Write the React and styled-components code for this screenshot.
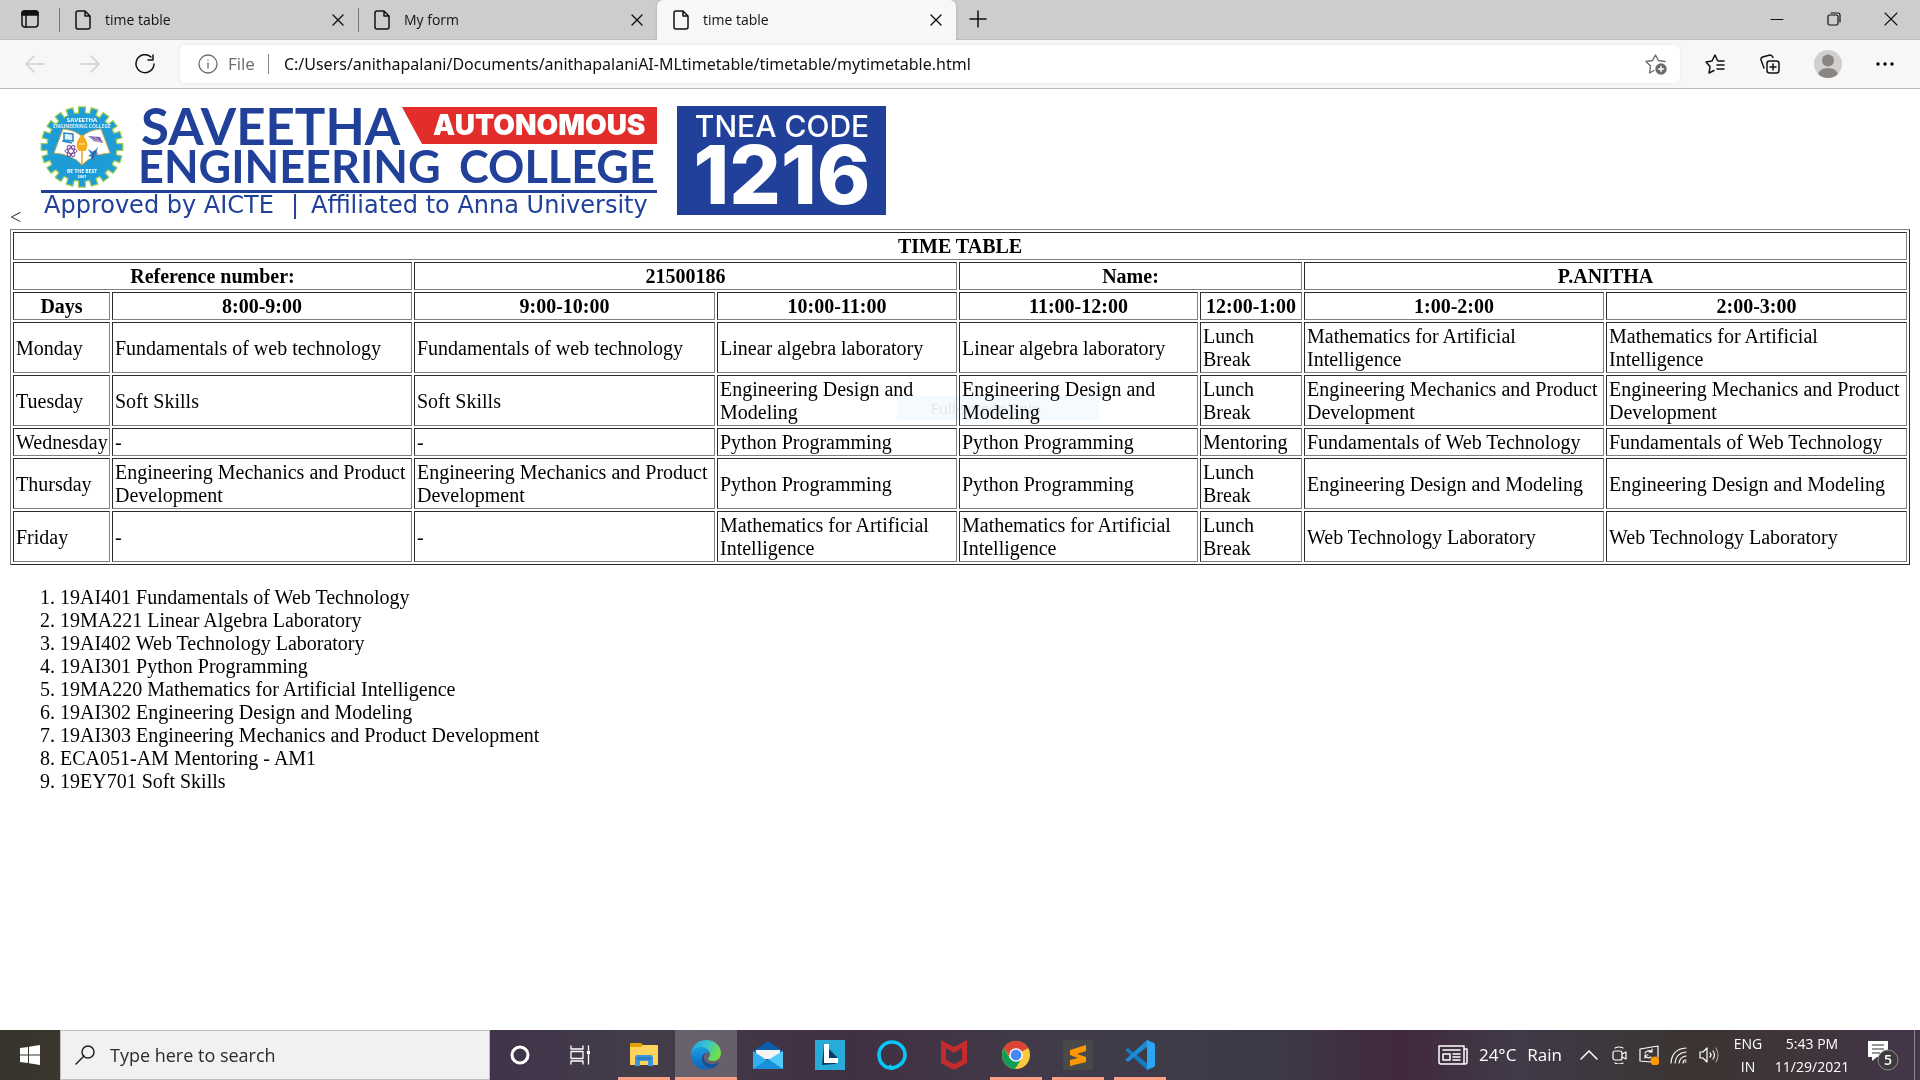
import React from "react";
import styled, { createGlobalStyle, css } from "styled-components";

const uiFont = `"Open Sans", "Noto Sans", sans-serif`;
const pageFont = `"Liberation Serif", "Times New Roman", serif`;

const GlobalStyle = createGlobalStyle`
  * { box-sizing: border-box; }
  body { margin: 0; background: #fff; }
  button, input { font: inherit; color: inherit; }
  button { border: 0; padding: 0; background: none; }
  svg { display: block; flex: none; }
`;

const Desktop = styled.div`
  display: flex;
  flex-direction: column;
  min-height: 100vh;
  font-family: ${uiFont};
  color: #111;
`;

/* ---------- Browser frame ---------- */
const TabStrip = styled.header`
  display: flex;
  height: 40px;
  background: #cdcdcd;
  box-shadow: inset 0 -1px #bdbdbd;
`;
const StripButton = styled.button`
  display: flex;
  align-items: center;
  justify-content: center;
  width: ${(p) => p.$width}px;
  height: 38px;
`;
const Tab = styled.div`
  display: flex;
  align-items: center;
  flex: 0 1 299px;
  min-width: 0;
  padding-right: 10px;
  ${(p) =>
    p.$active &&
    css`
      background: #f7f7f7;
      border-radius: 6px 6px 0 0;
      box-shadow: 0 0 3px rgba(0, 0, 0, 0.2);
      clip-path: inset(0 -4px 0 -4px);
    `}
`;
const TabDivider = styled.span`
  width: 1px;
  height: 24px;
  margin-right: 15px;
  background: ${(p) => (p.$hidden ? "transparent" : "#777")};
`;
const TabTitle = styled.button`
  flex: 1;
  min-width: 0;
  margin-left: 14px;
  font-size: 14px;
  line-height: 20px;
  text-align: left;
  white-space: nowrap;
  overflow: hidden;
`;
const TabClose = styled.button`
  display: flex;
  align-items: center;
  justify-content: center;
  width: 20px;
  height: 20px;
`;
const WindowControls = styled.div`
  display: flex;
  margin-left: auto;
  padding-right: 1px;
`;

const Toolbar = styled.nav`
  display: flex;
  align-items: center;
  height: 49px;
  padding: 0 8px 0 7px;
  background: #f7f7f7;
  border-bottom: 1px solid #bdbdbd;
`;
const ToolButton = styled.button`
  display: flex;
  align-items: center;
  justify-content: center;
  width: ${(p) => p.$width || 55}px;
  height: 38px;
  padding-bottom: 1px;
`;
const AddressBar = styled.div`
  display: flex;
  align-items: center;
  flex: 1;
  height: 38px;
  margin: 0 8px;
  padding: 0 13px 1px 18px;
  background: #fff;
  border-radius: 5px;
  box-shadow: 0 0 3px rgba(0, 0, 0, 0.08);
  font-size: 17px;
`;
const SchemeLabel = styled.label`
  margin-left: 10px;
  padding-right: 13px;
  border-right: 1px solid #888;
  line-height: 20px;
  color: #6b6b6b;
`;
const UrlInput = styled.input`
  flex: 1;
  min-width: 0;
  margin-left: 15px;
  padding: 0;
  border: 0;
  outline: 0;
  background: none;
  color: #111;
  font: 16px/24px "Noto Sans", sans-serif;
`;

/* ---------- Document ---------- */
const Page = styled.main`
  flex: 1;
  padding: 10px;
  font: 20px/23px ${pageFont};
  color: #000;
`;
const Banner = styled.div`
  color: #333;
`;
const BannerLogo = styled.svg`
  display: inline-block;
  vertical-align: baseline;
  overflow: visible;
`;
const TableArea = styled.div`
  position: relative;
`;
const Schedule = styled.table`
  width: 100%;
  table-layout: fixed;
  border-collapse: separate;
  border-spacing: 2px;
  border: 1px solid;
  border-color: #808080 #2c2c2c #2c2c2c #808080;

  th,
  td {
    padding: 2px 2px 1px;
    border: 1px solid;
    border-color: #2c2c2c #808080 #808080 #2c2c2c;
  }
  td {
    text-align: left;
  }
`;
const Row = styled.tr`
  height: ${(p) => (p.$tall ? 51 : 28)}px;
`;
const SnipHint = styled.div`
  position: absolute;
  top: 167px;
  left: 887px;
  width: 202px;
  height: 24px;
  padding-left: 34px;
  background: #f5fafe;
  color: #e3e6e9;
  font: 15px/24px ${uiFont};
  mix-blend-mode: multiply;
  pointer-events: none;
`;
const Subjects = styled.ol`
  margin: 21px 0;
  padding-left: 50px;
`;

/* ---------- Taskbar ---------- */
const TaskbarRoot = styled.footer`
  display: flex;
  height: 50px;
  color: #fff;
  background: linear-gradient(
    90deg,
    #36342a 0%,
    #3d3731 5%,
    #40344a 26%,
    #433d49 34%,
    #412f42 44%,
    #413b49 54%,
    #3d3a48 66%,
    #41293c 73%,
    #403a49 79%,
    #3b3432 88%,
    #3f3538 93%,
    #43364b 100%
  );
`;
const TaskButton = styled.button`
  display: flex;
  align-items: center;
  justify-content: center;
  width: ${(p) => p.$width || 62}px;
  height: 50px;
  background: ${(p) => (p.$active ? "rgba(255,255,255,.2)" : "transparent")};
  ${(p) =>
    p.$running &&
    css`
      background-image: linear-gradient(#ff9f86, #ff9f86);
      background-repeat: no-repeat;
      background-position: center bottom;
      background-size: ${p.$active ? "100%" : "52px"} 3px;
    `}
`;
const SearchBox = styled.label`
  display: flex;
  align-items: center;
  width: 430px;
  padding-left: 14px;
  background: #f1f1f1;
  border: 1px solid #bfbfbf;
`;
const SearchInput = styled.input`
  flex: 1;
  min-width: 0;
  margin-left: 15px;
  padding: 0;
  border: 0;
  outline: 0;
  background: none;
  font-size: 18px;
  &::placeholder {
    color: #2b2b2b;
    opacity: 1;
  }
`;
const AppList = styled.div`
  display: flex;
  margin-left: 3px;
`;
const Tray = styled.div`
  display: flex;
  align-items: center;
  margin-left: auto;
`;
const Weather = styled.button`
  display: flex;
  align-items: center;
  gap: 11px;
  margin-right: 12px;
  font-size: 17px;
  line-height: 24px;
`;
const TrayButton = styled.button`
  display: flex;
  align-items: center;
  justify-content: center;
  width: 30px;
  height: 50px;
`;
const TrayText = styled.button`
  width: ${(p) => p.$width}px;
  font-size: 14px;
  line-height: 23px;
  text-align: center;
`;
const Notifications = styled.button`
  width: 62px;
  height: 50px;
  padding-left: 16px;
`;
const ShowDesktop = styled.button`
  width: 6px;
  height: 50px;
  border-left: 1px solid #8c8490;
`;

/* ---------- Icons ---------- */
const Line = ({ w = 20, h = w, box, sw = 1.5, color = "currentColor", children }) => (
  <svg
    width={w}
    height={h}
    viewBox={box || `0 0 ${w} ${h}`}
    fill="none"
    stroke={color}
    strokeWidth={sw}
    strokeLinecap="round"
    strokeLinejoin="round"
    aria-hidden="true"
  >
    {children}
  </svg>
);
const FileIcon = () => (
  <Line w={16} h={20}>
    <path d="M3 1h7l5 5v11q0 2-2 2H3q-2 0-2-2V3q0-2 2-2zM10 1v5h5" />
  </Line>
);
const CloseIcon = () => (
  <Line w={12} sw={1.4}>
    <path d="M1 1l10 10M11 1L1 11" />
  </Line>
);

const gearPath = (() => {
  const pts = [];
  const teeth = 20;
  for (let i = 0; i < teeth; i++) {
    const mid = (i / teeth) * Math.PI * 2 - Math.PI / 2;
    [
      [-0.095, 35],
      [-0.085, 41],
      [0.085, 41],
      [0.095, 35],
    ].forEach(([a, r]) =>
      pts.push(`${(82 + r * Math.cos(mid + a)).toFixed(2)},${(147 + r * 0.98 * Math.sin(mid + a)).toFixed(2)}`)
    );
  }
  return pts.join(" ");
})();

const CollegeLogo = () => (
  <BannerLogo width="870" height="125" viewBox="21 99 870 125" role="img" aria-label="Saveetha Engineering College">
    <polygon points={gearPath} fill="#1d9cd8" stroke="#9fce4e" strokeWidth="1.2" />
    <g fill="#fff" fontFamily="Open Sans, sans-serif" fontWeight="700" textAnchor="middle">
      <text x="82" y="122" fontSize="6">SAVEETHA</text>
      <text x="82" y="128" fontSize="5" opacity=".85">ENGINEERING COLLEGE</text>
      <text x="82" y="173" fontSize="5">BE THE BEST</text>
      <text x="82" y="178" fontSize="4">2001</text>
    </g>
    <path d="M63 129Q76 130 82 137Q88 130 101 129L110 153Q92 154 82 165Q72 154 54 153z" fill="#fff" stroke="#c9a94c" strokeWidth="1" />
    <path d="M82 165V146" stroke="#f0a51e" strokeWidth="1.5" />
    <path d="M82 134q9 11 3 17h-6q-6-6 3-17z" fill="#f6ab1b" />
    <path d="M79 144h6" stroke="#fff2a8" />
    <path d="M64 133l9 1v7l-9-1zM62 141l10 2" fill="#dff2fb" stroke="#2c8fc7" strokeWidth="1.6" />
    <path d="M88 136l12 1 3 6-9-2z" fill="#7b5ba5" />
    <path d="M89 137l11 5M93 136l8 6" stroke="#d8c5ea" strokeWidth=".7" />
    <g fill="none" stroke="#7a489e" strokeWidth="1">
      <ellipse cx="71" cy="151" rx="6" ry="2.4" />
      <ellipse cx="71" cy="151" rx="6" ry="2.4" transform="rotate(60 71 151)" />
      <ellipse cx="71" cy="151" rx="6" ry="2.4" transform="rotate(120 71 151)" />
    </g>
    <path d="M88 149l5 3 5-5-2 7 4 2-5 1-1 5-2-5-4-1 3-2z" fill="#2a86bd" />
    <path d="M92 159l2-8 4 3" stroke="#3b3b92" fill="none" />

    <g fill="#21409a" fontFamily="Lato, sans-serif" fontWeight="700">
      <text x="141" y="145" fontSize="51">SAVEETHA</text>
      <text x="138" y="183" fontSize="45">ENGINEERING</text>
      <text x="459" y="183" fontSize="45">COLLEGE</text>
    </g>
    <polygon points="402,107 657,107 657,144 422,144" fill="#e32d2b" />
    <text x="433" y="135" fontSize="28" fontFamily="Inter, sans-serif" fontWeight="900" fill="#fff">AUTONOMOUS</text>
    <rect x="41" y="190" width="616" height="3" fill="#21409a" />
    <g fill="#21409a" fontFamily="DejaVu Sans, sans-serif" fontSize="24">
      <text x="44" y="213">Approved by AICTE</text>
      <text x="291" y="213">|</text>
      <text x="311" y="213">Affiliated to Anna University</text>
    </g>
    <rect x="677" y="106" width="209" height="109" fill="#21409a" />
    <g fill="#fff" fontFamily="Inter, sans-serif" textAnchor="middle">
      <text x="782" y="137" fontSize="30" fontWeight="500">TNEA CODE</text>
      <text x="782" y="204" fontSize="81" fontWeight="800">1216</text>
    </g>
  </BannerLogo>
);

const ExplorerIcon = () => (
  <svg width="30" height="30" viewBox="0 0 30 30" aria-hidden="true">
    <path d="M1 4q0-1 1-1h10l2 2v4H1z" fill="#e3a008" />
    <path d="M1 7h11l2-2h14q1 0 1 1v19H1z" fill="#ffd35c" />
    <path d="M6 26V17q0-2 2-2h14q2 0 2 2v9h-5v-5h-8v5z" fill="#3b97dc" />
    <path d="M8 17h14v3H8z" fill="#2c7fc2" />
  </svg>
);
const EdgeIcon = () => (
  <svg width="30" height="30" viewBox="0 0 30 30" aria-hidden="true">
    <defs>
      <linearGradient id="edgeTop" x1="0" y1="0" x2="1" y2=".4">
        <stop offset="0" stopColor="#1ea0e4" />
        <stop offset=".5" stopColor="#35c1d5" />
        <stop offset="1" stopColor="#6fe04a" />
      </linearGradient>
      <linearGradient id="edgeSide" x1="0" y1="0" x2="0" y2="1">
        <stop offset="0" stopColor="#1b9de2" />
        <stop offset="1" stopColor="#0b62bb" />
      </linearGradient>
    </defs>
    <path d="M0 14C1 5 7 0 15 0c9 0 15 6 15 13 0 5-4 8-8 8-3 0-5-1-5-2 0-1 2-2 2-5 0-3-4-6-8-6-5 0-9 3-11 6z" fill="url(#edgeTop)" />
    <path d="M0 15c0-4 4-8 10-8 5 0 8 3 9 6-3-2-8 1-8 6 0 6 4 9 7 10.500C8 31 0 25 0 15z" fill="url(#edgeSide)" />
    <path d="M14 13c-3 2-4 6-2 10 3 6 10 8 15 1 1-1 0-2-1-1-6 3-14 0-13-6 0-2 1-3 1-4z" fill="#10529f" />
  </svg>
);
const MailIcon = () => (
  <svg width="30" height="30" viewBox="0 0 30 30" aria-hidden="true">
    <path d="M0 11L15 1l15 10v6H0z" fill="#0b5cab" />
    <path d="M3 10h24v9H3z" fill="#f4f4f4" />
    <path d="M0 11l15 10 15-10v18H0z" fill="#2cb0ef" />
    <path d="M0 29L30 11v18z" fill="#52c8f7" />
    <path d="M0 29l15-10 15 10z" fill="#1a8fdc" />
  </svg>
);
const LIcon = () => (
  <svg width="30" height="30" viewBox="0 0 30 30" aria-hidden="true">
    <path d="M0 0h30v30H0z" fill="#28abd8" />
    <path d="M9 4L7 25l13-1 3-2V18z" fill="#0b3c68" />
    <path d="M9 4h5v14h9v5H9z" fill="#fff" />
  </svg>
);
const AlexaIcon = () => (
  <svg width="30" height="30" viewBox="0 0 30 30" fill="none" aria-hidden="true">
    <path d="M12 28C5 26 2 21 2 15a13 13 0 0 1 26 0c0 7-6 12-14 13.500 0-2-1-2-2-3" stroke="#08c6f8" strokeWidth="3.600" />
  </svg>
);
const McAfeeIcon = () => (
  <svg width="28" height="30" viewBox="0 0 28 30" aria-hidden="true">
    <path d="M1 0l13 7 13-7v23l-13 7-13-7zM6 8v12l8 4 8-4V8l-8 5z" fill="#c32b2d" fillRule="evenodd" />
  </svg>
);
const ChromeIcon = () => (
  <svg width="28" height="28" viewBox="0 0 28 28" aria-hidden="true">
    <circle cx="14" cy="14" r="14" fill="#fbc93d" />
    <path d="M14 14L1.900 7A14 14 0 0 1 26.100 7z" fill="#db4437" />
    <path d="M14 7h12.100A14 14 0 0 0 1.900 7L8 16z" fill="#db4437" />
    <path d="M1.900 7A14 14 0 0 0 13 28l6.500-10.500L14 20l-6-3z" fill="#0f9d58" />
    <circle cx="14" cy="14" r="6.800" fill="#fff" />
    <circle cx="14" cy="14" r="5.400" fill="#4587f4" />
  </svg>
);
const SublimeIcon = () => (
  <svg width="30" height="30" viewBox="0 0 30 30" aria-hidden="true">
    <rect width="30" height="30" rx="2" fill="#494949" />
    <path d="M7 10l16-5v6l-9 3 9 3v5L7 26v-6l8-2-8-3z" fill="#ff9800" />
  </svg>
);
const CodeIcon = () => (
  <svg width="30" height="30" viewBox="0 0 30 30" aria-hidden="true">
    <path d="M0 10l3-2 20 16-1 6z" fill="#1479bd" />
    <path d="M0 20l3 2L23 6l-1-6z" fill="#1b8dd6" />
    <path d="M22 0l7 3q1 1 1 2v20q0 1-1 2l-7 3z" fill="#2ba5f5" />
  </svg>
);

/* ---------- Data ---------- */
const tabs = [
  { title: "time table" },
  { title: "My form" },
  { title: "time table", active: true },
];
const columns = [97, 300, 301, 240, 239, 102, 300, 301];
const hours = ["Days", "8:00-9:00", "9:00-10:00", "10:00-11:00", "11:00-12:00", "12:00-1:00", "1:00-2:00", "2:00-3:00"];
const fwt = "Fundamentals of web technology";
const emp = "Engineering Mechanics and Product Development";
const edm = "Engineering Design and Modeling";
const mai = "Mathematics for Artificial Intelligence";
const lab = "Linear algebra laboratory";
const py = "Python Programming";
const days = [
  ["Monday", fwt, fwt, lab, lab, "Lunch Break", mai, mai],
  ["Tuesday", "Soft Skills", "Soft Skills", edm, edm, "Lunch Break", emp, emp],
  ["Wednesday", "-", "-", py, py, "Mentoring", "Fundamentals of Web Technology", "Fundamentals of Web Technology"],
  ["Thursday", emp, emp, py, py, "Lunch Break", edm, edm],
  ["Friday", "-", "-", mai, mai, "Lunch Break", "Web Technology Laboratory", "Web Technology Laboratory"],
];
const subjects = [
  "19AI401 Fundamentals of Web Technology",
  "19MA221 Linear Algebra Laboratory",
  "19AI402 Web Technology Laboratory",
  "19AI301 Python Programming",
  "19MA220 Mathematics for Artificial Intelligence",
  "19AI302 Engineering Design and Modeling",
  "19AI303 Engineering Mechanics and Product Development",
  "ECA051-AM Mentoring - AM1",
  "19EY701 Soft Skills",
];
const apps = [
  { name: "File Explorer", Icon: ExplorerIcon, running: true },
  { name: "Microsoft Edge", Icon: EdgeIcon, running: true, active: true },
  { name: "Mail", Icon: MailIcon },
  { name: "L", Icon: LIcon },
  { name: "Alexa", Icon: AlexaIcon },
  { name: "McAfee", Icon: McAfeeIcon },
  { name: "Google Chrome", Icon: ChromeIcon, running: true },
  { name: "Sublime Text", Icon: SublimeIcon, running: true },
  { name: "Visual Studio Code", Icon: CodeIcon, running: true },
];

const BrowserFrame = () => (
  <>
    <TabStrip>
      <StripButton $width={59} aria-label="Tab actions">
        <Line w={18}>
          <rect x="1" y="1" width="16" height="16" rx="3" />
          <path d="M1 5V3q0-2 2-2h12q2 0 2 2v2z" fill="currentColor" />
          <path d="M5 5v12" />
        </Line>
      </StripButton>
      {tabs.map((t, i) => (
        <Tab key={i} $active={t.active}>
          <TabDivider $hidden={t.active} />
          <FileIcon />
          <TabTitle>{t.title}</TabTitle>
          <TabClose aria-label="Close tab">
            <CloseIcon />
          </TabClose>
        </Tab>
      ))}
      <StripButton $width={44} aria-label="New tab">
        <Line w={18}>
          <path d="M9 1v16M1 9h16" />
        </Line>
      </StripButton>
      <WindowControls>
        <StripButton $width={57} aria-label="Minimize">
          <Line w={14} sw={1}>
            <path d="M1 7.500h12" />
          </Line>
        </StripButton>
        <StripButton $width={57} aria-label="Restore">
          <Line w={14} sw={1.200}>
            <rect x="1" y="3" width="10" height="10" rx="1.500" />
            <path d="M4 1h7q2 0 2 2v7" />
          </Line>
        </StripButton>
        <StripButton $width={57} aria-label="Close">
          <Line w={14} sw={1.100}>
            <path d="M1 1l12 12M13 1L1 13" />
          </Line>
        </StripButton>
      </WindowControls>
    </TabStrip>
    <Toolbar>
      <ToolButton aria-label="Back">
        <Line color="#cfcfcf">
          <path d="M19 10H1M9 2l-8 8 8 8" />
        </Line>
      </ToolButton>
      <ToolButton aria-label="Forward">
        <Line color="#cfcfcf">
          <path d="M1 10h18M11 2l8 8-8 8" />
        </Line>
      </ToolButton>
      <ToolButton aria-label="Refresh">
        <Line>
          <path d="M19 10a9 9 0 1 1-3-7M18 1v5h-5" />
        </Line>
      </ToolButton>
      <AddressBar>
        <Line color="#6b6b6b" sw={1.300}>
          <circle cx="10" cy="10" r="9" />
          <path d="M10 9v5M10 6v.1" />
        </Line>
        <SchemeLabel htmlFor="url">File</SchemeLabel>
        <UrlInput
          id="url"
          defaultValue="C:/Users/anithapalani/Documents/anithapalaniAI-MLtimetable/timetable/mytimetable.html"
        />
        <button aria-label="Add to favorites">
          <Line w={22} color="#6b6b6b" sw={1.400}>
            <path d="M9 17.500L4.500 20l1-7L1 8.500l6.500-1L10.500 2l3 5.500 6.500 1" />
            <circle cx="16" cy="16" r="5" fill="#6b6b6b" />
            <path d="M16 13.500v5M13.500 16h5" stroke="#fff" />
          </Line>
        </button>
      </AddressBar>
      <ToolButton $width={54} aria-label="Favorites">
        <Line>
          <path d="M9 16.500L4 19l1-6.500L1 8l6-1 3-6 2.500 5.500M13 7h6M12 11h7M12 15h7" />
        </Line>
      </ToolButton>
      <ToolButton $width={56} aria-label="Collections">
        <Line>
          <rect x="7" y="7" width="12" height="12" rx="2.500" />
          <path d="M13 10v6M10 13h6M4 14L1 6q-.5-2 1.500-3L10 1q2 0 3 2.500" />
        </Line>
      </ToolButton>
      <ToolButton $width={60} aria-label="Profile">
        <svg width="28" height="28" viewBox="0 0 28 28" aria-hidden="true">
          <circle cx="14" cy="14" r="14" fill="#d2d0ce" />
          <circle cx="14" cy="10.500" r="6" fill="#8a8583" />
          <path d="M4 24q2-6 10-6t10 6q-4 4-10 4T4 24z" fill="#8a8583" />
        </svg>
      </ToolButton>
      <ToolButton $width={54} aria-label="Settings and more">
        <svg width="18" height="4" viewBox="0 0 18 4" aria-hidden="true">
          <circle cx="2" cy="2" r="1.700" />
          <circle cx="9" cy="2" r="1.700" />
          <circle cx="16" cy="2" r="1.700" />
        </svg>
      </ToolButton>
    </Toolbar>
  </>
);

const Taskbar = () => (
  <TaskbarRoot>
    <TaskButton $width={60} aria-label="Start">
      <svg width="20" height="20" viewBox="0 0 20 20" fill="#fff" aria-hidden="true">
        <path d="M0 3l8-1v7.500H0zM9 1.800L20 0v9.500H9zM0 10.500h8V18l-8-1zM9 10.500h11V20L9 18.200z" />
      </svg>
    </TaskButton>
    <SearchBox>
      <Line color="#222">
        <circle cx="13" cy="7" r="6" />
        <path d="M9 11l-8 8" />
      </Line>
      <SearchInput placeholder="Type here to search" aria-label="Search" />
    </SearchBox>
    <TaskButton $width={60} aria-label="Cortana">
      <Line sw={3}>
        <circle cx="10" cy="10" r="8" />
      </Line>
    </TaskButton>
    <TaskButton $width={60} aria-label="Task view">
      <Line sw={1.300}>
        <path d="M1 1v3h12V1M1 19v-3h12v3M1 6.500h12v7H1zM18.500 1v4M18.500 10v9" />
        <path d="M17.500 6.500h2v2h-2z" fill="#fff" />
      </Line>
    </TaskButton>
    <AppList>
      {apps.map(({ name, Icon, running, active }) => (
        <TaskButton key={name} aria-label={name} $running={running} $active={active}>
          <Icon />
        </TaskButton>
      ))}
    </AppList>
    <Tray>
      <Weather>
        <Line w={30} h={20}>
          <path d="M3 1h23v18H3q-2 0-2-2V1h2M26 4h3v13q0 2-2 2h-1M5 5h17M15 9h7M15 12h7M15 15h7" />
          <rect x="5" y="9" width="7" height="6" />
        </Line>
        <span>24°C</span>
        <span>Rain</span>
      </Weather>
      <TrayButton aria-label="Show hidden icons">
        <Line w={18} h={10}>
          <path d="M1 9l8-8 8 8" />
        </Line>
      </TrayButton>
      <TrayButton aria-label="Meet now">
        <Line w={18} sw={1.200}>
          <rect x="3" y="5" width="9" height="9" rx="2" />
          <path d="M12 8l4-2v7l-4-2M5 2q4-2 8 0M5 17q4 2 8 0" />
        </Line>
      </TrayButton>
      <TrayButton aria-label="Update">
        <Line w={20} sw={1.200}>
          <path d="M12 17L1 16V4l18-3v11M6 8q3-4 7-1V4M13 7h-3M6 13v-3h3M6 11q3 3 6 1" />
          <circle cx="16" cy="16" r="4" fill="#ff9800" stroke="#ff9800" />
        </Line>
      </TrayButton>
      <TrayButton aria-label="Network">
        <Line w={18} sw={1.200}>
          <path d="M1 17Q2 3 16 2M5 17Q6 7 16 6M9 17q1-6 7-7M13 17q0-3 3-3M15 16h1" />
        </Line>
      </TrayButton>
      <TrayButton aria-label="Volume">
        <Line w={20} sw={1.200}>
          <path d="M1 7h3l4-4v14l-4-4H1zM11 8q2 2 0 4M14 6q3 4 0 8" />
          <path d="M17 3q4 7 0 14" opacity=".5" />
        </Line>
      </TrayButton>
      <TrayText $width={48}>
        ENG
        <br />
        IN
      </TrayText>
      <TrayText $width={80}>
        5:43 PM
        <br />
        11/29/2021
      </TrayText>
      <Notifications aria-label="5 notifications">
        <svg width="32" height="32" viewBox="0 0 32 32">
          <path d="M0 2h20v16H9l-5 4v-4H0z" fill="#fff" />
          <path d="M4 6h12M4 10h12M4 14h8" stroke="#333" strokeWidth="1.200" />
          <circle cx="20" cy="21" r="10" fill="#3d3b3d" stroke="#8b888b" />
          <text x="20" y="26" fontSize="14" fontWeight="600" fontFamily="Open Sans, sans-serif" fill="#fff" textAnchor="middle">
            5
          </text>
        </svg>
      </Notifications>
      <ShowDesktop aria-label="Show desktop" />
    </Tray>
  </TaskbarRoot>
);

export default function App() {
  return (
    <Desktop>
      <GlobalStyle />
      <BrowserFrame />
      <Page>
        <Banner>
          &lt;
          <CollegeLogo />
        </Banner>
        <TableArea>
          <Schedule>
            <colgroup>
              {columns.map((w, i) => (
                <col key={i} width={w} />
              ))}
            </colgroup>
            <tbody>
              <Row>
                <th colSpan={8}>TIME TABLE</th>
              </Row>
              <Row>
                <th colSpan={2}>Reference number:</th>
                <th colSpan={2}>21500186</th>
                <th colSpan={2}>Name:</th>
                <th colSpan={2}>P.ANITHA</th>
              </Row>
              <Row>
                {hours.map((h) => (
                  <th key={h}>{h}</th>
                ))}
              </Row>
              {days.map((d) => (
                <Row key={d[0]} $tall={d[0] !== "Wednesday"}>
                  {d.map((c, i) => (
                    <td key={i}>{c}</td>
                  ))}
                </Row>
              ))}
            </tbody>
          </Schedule>
          <SnipHint>Full-screen Snip</SnipHint>
        </TableArea>
        <Subjects>
          {subjects.map((s) => (
            <li key={s}>{s}</li>
          ))}
        </Subjects>
      </Page>
      <Taskbar />
    </Desktop>
  );
}
